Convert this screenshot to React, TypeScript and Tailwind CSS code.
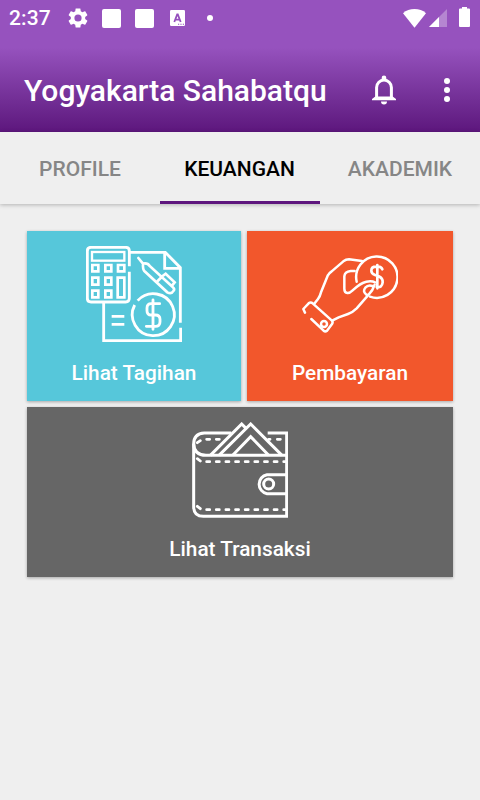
import type { ReactNode } from "react";

const tabs = [
  { label: "PROFILE", active: false },
  { label: "KEUANGAN", active: true },
  { label: "AKADEMIK", active: false },
];

function StatusBar() {
  return (
    <div className="flex h-9 items-center pl-[9px] pr-2.5 text-white">
      <span className="w-[59px] text-[21px] font-medium leading-none tracking-[0.1px]">2:37</span>
      <svg className="h-5 w-5" viewBox="2 2 20 20" fill="currentColor">
        <path d="M19.14 12.94c.04-.3.06-.61.06-.94 0-.32-.02-.64-.07-.94l2.03-1.58c.18-.14.23-.41.12-.61l-1.92-3.32c-.12-.22-.37-.29-.59-.22l-2.39.96c-.5-.38-1.03-.7-1.62-.94l-.36-2.54c-.04-.24-.24-.41-.48-.41h-3.84c-.24 0-.43.17-.47.41l-.36 2.54c-.59.24-1.13.57-1.62.94l-2.39-.96c-.22-.08-.47 0-.59.22L2.74 8.87c-.12.21-.08.47.12.61l2.03 1.58c-.05.3-.09.63-.09.94s.02.64.07.94l-2.03 1.58c-.18.14-.23.41-.12.61l1.92 3.32c.12.22.37.29.59.22l2.39-.96c.5.38 1.03.7 1.62.94l.36 2.54c.05.24.24.41.48.41h3.84c.24 0 .44-.17.47-.41l.36-2.54c.59-.24 1.13-.56 1.62-.94l2.39.96c.22.08.47 0 .59-.22l1.92-3.32c.12-.22.07-.47-.12-.61l-2.01-1.58zM12 15.6a3.6 3.6 0 1 1 0-7.2 3.6 3.6 0 0 1 0 7.2z" />
      </svg>
      <span className="ml-3.5 h-[19px] w-[19px] rounded-[2px] bg-white" />
      <span className="ml-3.5 h-[19px] w-[19px] rounded-[2px] bg-white" />
      {/* Keyboard badge */}
      <svg className="ml-4 h-4 w-[15px]" viewBox="0 0 15 16">
        <rect width="15" height="16" rx="1.2" fill="#fff" />
        <path d="M4.300 12 7.200 4.500h.6l2.900 7.500M5.300 9.700h4.400" fill="none" stroke="#9550bd" strokeWidth="1.8" />
        <path d="M8 14.3h1.200M10.400 14.300h1.200M12.800 14.300h1.200" stroke="#9550bd" strokeWidth="1.1" />
      </svg>
      <span className="ml-[22px] h-1.5 w-1.5 rounded-full bg-white" />
      <svg className="ml-auto h-[19px] w-[23px]" viewBox="0 0 23 19" fill="currentColor">
        <path d="M0 4.3C6-1.3 17-1.3 23 4.3L11.5 18.7z" />
      </svg>
      <svg className="ml-[3px] h-[18px] w-[18px]" viewBox="0 0 18 18" fill="currentColor">
        <path d="M0 18 18 0v18z" opacity=".3" />
        <path d="M0 18 10 8v10z" />
      </svg>
      <svg className="ml-3 -mt-0.5 h-5 w-[11px]" viewBox="0 0 11 20" fill="currentColor">
        <path d="M3 0h5v1.500h2q1 0 1 1V19q0 1-1 1H1q-1 0-1-1V2.500q0-1 1-1h2z" />
      </svg>
    </div>
  );
}

function Toolbar() {
  return (
    <div className="flex h-24 items-center pl-6 pr-[30px] pt-3 text-white">
      <h1 className="pt-0.5 text-[30px] font-medium leading-none">Yogyakarta Sahabatqu</h1>
      <svg className="ml-auto h-[30px] w-6" viewBox="0 0 24 30">
        <path
          d="M4.600 24V12.500a7.400 7.400 0 0 1 14.800 0V24"
          fill="none"
          stroke="currentColor"
          strokeWidth="3"
        />
        <path
          d="M12 .5a2.300 2.300 0 0 1 2.300 2.300V6H9.700V2.800A2.300 2.300 0 0 1 12 .5M0 25.300v-1.300l3.300-2.600h17.400l3.300 2.600v1.300zM9 26.500h6a3 3 0 0 1-6 0z"
          fill="currentColor"
        />
      </svg>
      <div className="ml-12 flex flex-col gap-[3px]">
        <span className="h-1.5 w-1.5 rounded-full bg-white" />
        <span className="h-1.5 w-1.5 rounded-full bg-white" />
        <span className="h-1.5 w-1.5 rounded-full bg-white" />
      </div>
    </div>
  );
}

function BillIcon() {
  return (
    <svg className="h-24 w-24" viewBox="48 33 288 288" fill="none" stroke="#fff" strokeWidth="8.5">
      {/* Calculator */}
      <path d="M178 94V48q0-11-11-11H63q-11 0-11 11v142q0 11 11 11h104q11 0 11-11v-80" />
      <rect x="66" y="51" width="97" height="26" strokeWidth="7" />
      <g strokeWidth="8">
        <path d="M67 90h18v19H67zM106 90h18v19h-18zM144 90h19v19h-19z" />
        <path d="M67 128h18v21H67zM106 128h18v21h-18zM143 128h20v59h-20z" />
        <path d="M67 167h18v20H67zM106 167h18v20h-18z" />
      </g>
      {/* Sheet */}
      <path d="M180 52h106l45 46v165M284 53v47h48M332 278v39H101V203" />
      <path d="M125 244h38M125 268h38" />
      {/* Pen */}
      <path
        d="m205 69 14 17M219 86q14-3 20 7l69 63q7 6 3 11-7 12-19 5l-69-64q-5-5-4-22zM263 138l15-15M281 121l6-5 27 26-8 10"
        strokeWidth="8"
        strokeLinecap="round"
      />
      {/* Coin */}
      <path d="M203 197a63 63 0 1 1-9 13" />
      <path
        d="M269 206h-25q-13 0-13 13v8q0 13 13 13h12q14 0 14 13v7q0 14-14 14h-27M249 195v88"
        strokeLinecap="round"
      />
    </svg>
  );
}

function PaymentIcon() {
  return (
    <svg
      className="h-24 w-24"
      viewBox="36 18 288 288"
      fill="none"
      stroke="#fff"
      strokeWidth="7.5"
      strokeLinecap="round"
      strokeLinejoin="round"
    >
      {/* Hand */}
      <path d="m74 190 10-13q6-8 9-20l20-50q4-8 12-13l35-30q8-6 17-6l39 5" />
      <path d="M194 93h-12q-18 2-19 16v37q0 12 9 13 7 1 15-7 25-24 42-27 17-3 26 2" />
      <path d="M247 138q-13-4-21 5-9 11 2 20 5 3 9 1M254 134q-5 17-18 30l-36 41q-12 12-26 17l-28 10-18 9" />
      {/* Cuff */}
      <path d="m45 218-5-11 16-17q6-5 12 0l57 51q5 5 1 11l-15 20q-6 5-11-1l-36-34" />
      <circle cx="102" cy="252" r="9" />
      {/* Coin */}
      <path d="M200 125a62 62 0 1 1 40 45" />
      <path
        d="M277 88q-3-8-12-8h-7q-14 0-14 12 0 9 11 13l11 4q13 6 12 18-2 17-18 14M262 75v70"
        strokeWidth="8"
      />
    </svg>
  );
}

function WalletIcon() {
  return (
    <svg className="h-24 w-24" viewBox="36 30 288 288" fill="none" stroke="#fff" strokeWidth="9">
      <path d="M154 63H73Q41 65 41 96v188q0 29 29 29h250V63h-57" />
      <path d="M41 95q1 35 37 35h242" />
      {/* Notes */}
      <path d="m91 130 94-94 14 14M117 130l95-94 94 94M158 130l54-56 54 56" />
      {/* Clasp */}
      <path d="M320 188h-59a29 29 0 0 0 0 57h59" />
      <circle cx="266" cy="216" r="15" />
      {/* Stitching */}
      <g strokeWidth="8.5" strokeLinecap="round">
        <path d="m52 92 9-6M80 82h9M109 82h9M266 82h4M292 82h9M52 140l9 7M52 283l9 7" />
        <path d="M80 149h238M80 293h238" strokeDasharray="9 19.900" />
      </g>
    </svg>
  );
}

interface TileProps {
  label: string;
  className: string;
  children: ReactNode;
}

function Tile({ label, className, children }: TileProps) {
  return (
    <div
      className={`flex h-[170px] flex-col items-center pt-[15px] text-white shadow-[0_1px_3px_rgba(0,0,0,0.3)] ${className}`}
    >
      {children}
      <span className="mt-[15px] text-[20.8px] font-medium leading-8">{label}</span>
    </div>
  );
}

export default function App() {
  return (
    <div className="h-[800px] w-[480px] overflow-hidden bg-[#efefef] font-['Roboto',sans-serif]">
      <header className="h-[132px] bg-linear-to-b from-[#9652be] from-[36%] to-[#5d167d]">
        <StatusBar />
        <Toolbar />
      </header>

      <nav className="grid h-[72px] grid-cols-[160px_160px_160px] shadow-[0_1px_4px_rgba(0,0,0,0.25)]">
        {tabs.map((tab) => (
          <div
            key={tab.label}
            className={
              tab.active
                ? "flex items-center justify-center border-b-3 border-[#5d167d] pt-[6px] pr-px text-[21px] font-medium text-black"
                : "flex items-center justify-center border-b-3 border-transparent pt-[6px] text-[21px] font-medium text-[#868686]"
            }
          >
            {tab.label}
          </div>
        ))}
      </nav>

      <main className="grid grid-cols-[214px_206px] gap-1.5 px-[27px] pt-[27px]">
        <Tile label="Lihat Tagihan" className="bg-[#56c7da]">
          <BillIcon />
        </Tile>
        <Tile label="Pembayaran" className="bg-[#f2572c]">
          <PaymentIcon />
        </Tile>
        <Tile label="Lihat Transaksi" className="col-span-2 bg-[#666666]">
          <WalletIcon />
        </Tile>
      </main>
    </div>
  );
}
